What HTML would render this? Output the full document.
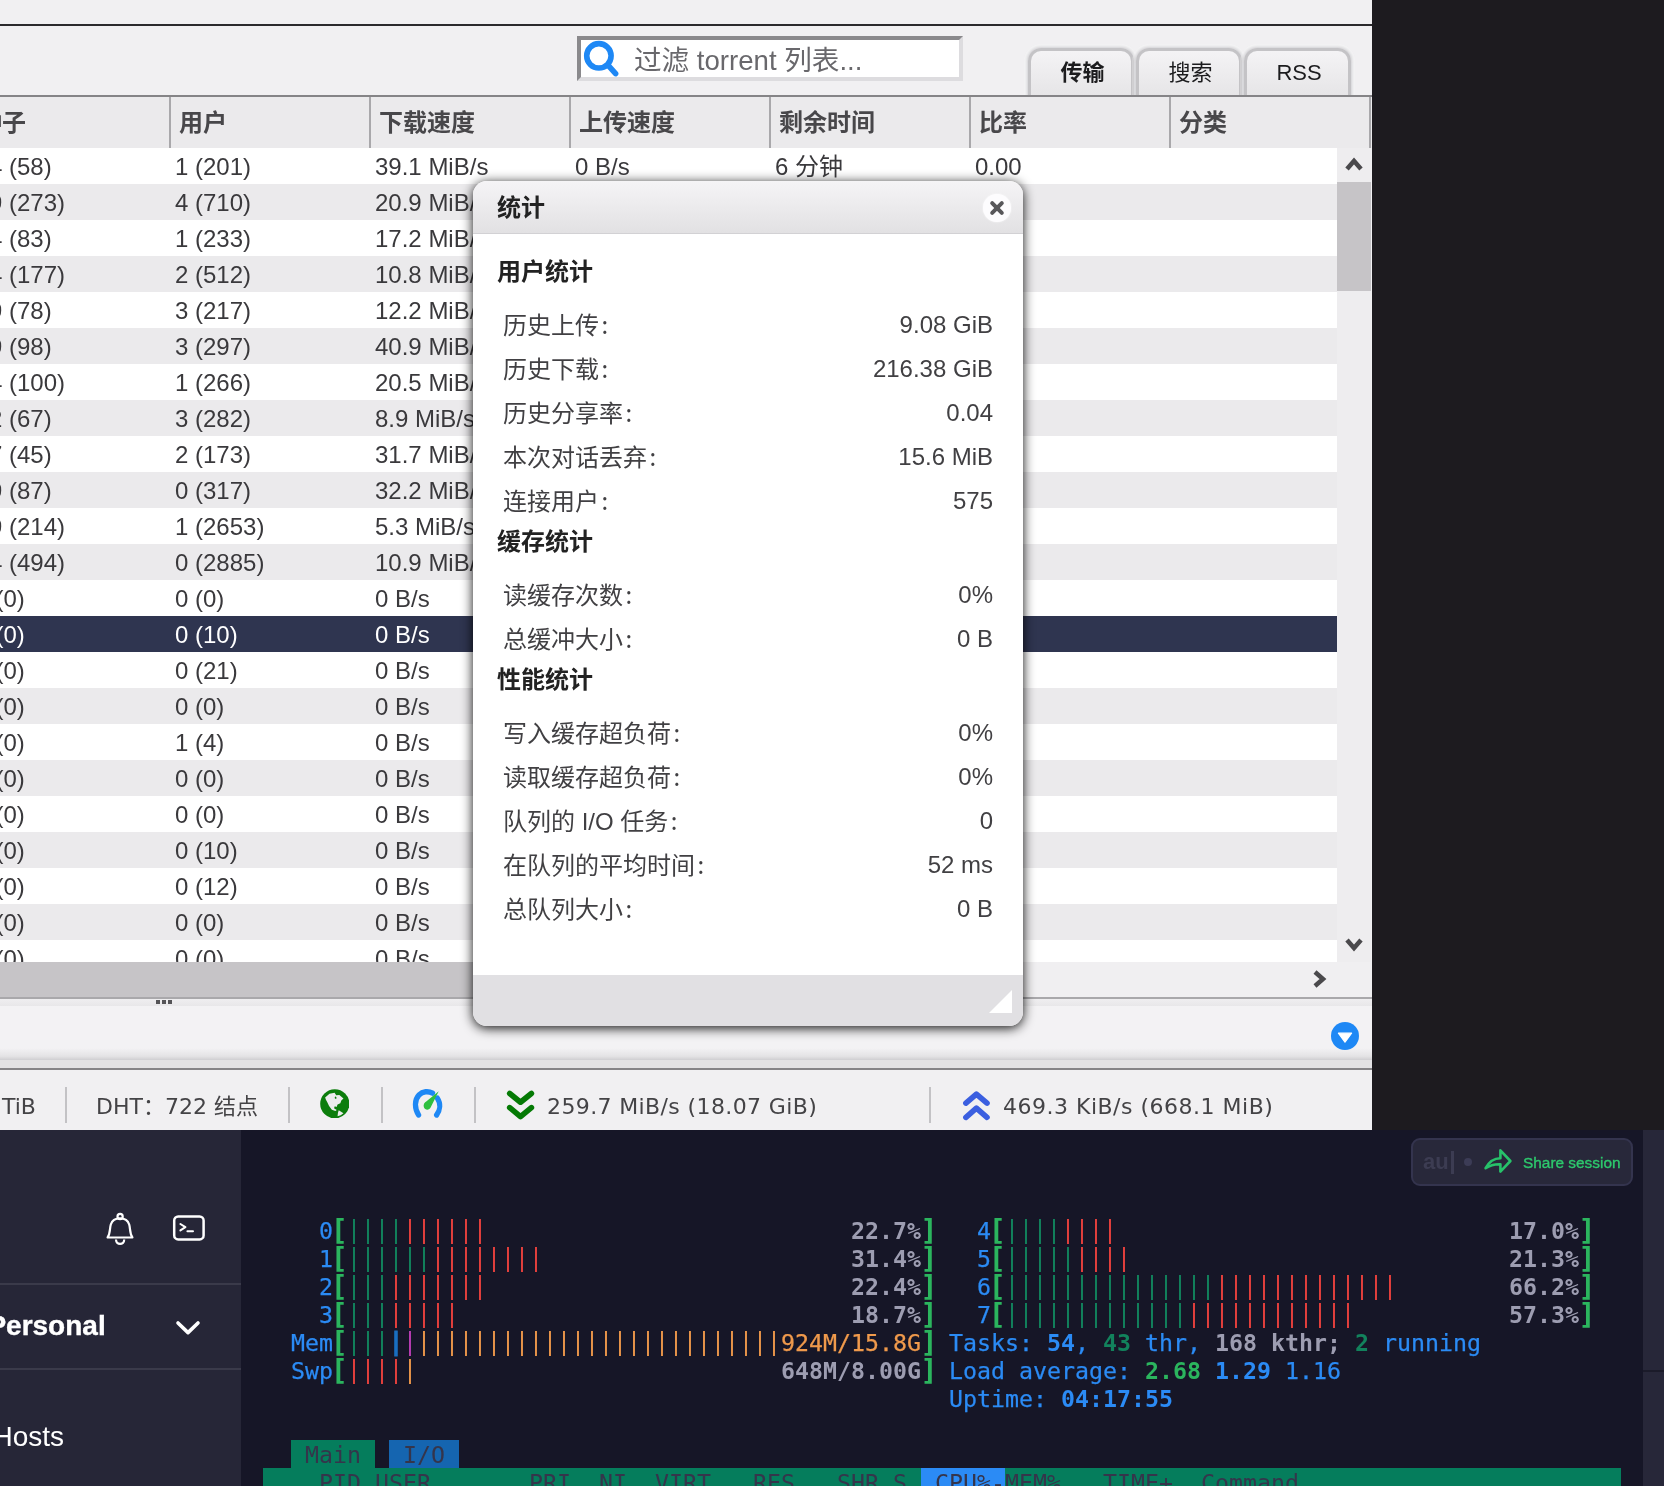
<!DOCTYPE html>
<html lang="zh-CN">
<head>
<meta charset="utf-8">
<title>qBittorrent</title>
<style>
*{box-sizing:border-box;margin:0;padding:0}
html,body{width:1664px;height:1486px;overflow:hidden;background:#1d1b1f}
body{position:relative;font-family:"Liberation Sans","Noto Sans CJK SC",sans-serif;color:#3b3b3d}
.abs{position:absolute}
/* ---------- qBittorrent app ---------- */
#app{will-change:transform;position:absolute;left:0;top:0;width:1372px;height:1130px;background:#f1f0f2;overflow:hidden}
#topline{position:absolute;left:0;top:24px;width:1372px;height:2px;background:#2b2a2d}
#search{position:absolute;left:577px;top:36px;width:386px;height:45px;background:#fff;border:4px solid;border-color:#8a898c #dddcdf #dddcdf #8a898c}
#search .ph{position:absolute;left:53px;top:3px;font:27.6px/36px "Liberation Sans","Noto Sans CJK SC",sans-serif;color:#69686c;white-space:nowrap}
.tab{position:absolute;top:48px;height:48px;width:106px;border:3px solid #c4c3c6;border-bottom:none;border-radius:13px 13px 0 0;background:linear-gradient(#f4f3f5,#e6e5e7);box-shadow:0 0 3px 1px rgba(140,138,146,.35),0 0 0 4px rgba(255,255,255,.25);font-size:22px;line-height:43px;padding-left:3px;text-align:center;color:#1c1c1e}
#hdr{position:absolute;left:0;top:95px;width:1372px;height:53px;background:#ebeaec;border-top:2px solid #858487}
#hdr div{position:absolute;top:0;height:51px;border-left:2px solid #a9a8ab;padding-left:8px;font:bold 24px/51px "Liberation Sans","Noto Sans CJK SC",sans-serif;color:#48474a;white-space:nowrap}
#rows{position:absolute;left:0;top:148px;width:1337px;height:814px;overflow:hidden;background:#fff}
.r{position:absolute;left:0;width:1337px;height:36px;font-size:24px;line-height:37px;color:#3a393c;white-space:nowrap}
.r.g{background:#ebeaec}
.r.sel{background:#2f3550;color:#fff}
.r .z{left:-24.5px}
.r span{position:absolute;top:0}
.c1{left:-11px}.c2{left:175px}.c3{left:375px}.c4{left:575px}.c5{left:775px}.c6{left:975px}

#vsb{position:absolute;left:1337px;top:148px;width:34px;height:814px;background:#eeedef}
#vsb .thumb{position:absolute;left:0;top:34px;width:34px;height:109px;background:#c6c4c7}
#hsb{position:absolute;left:0;top:962px;width:1372px;height:35px;background:#f0eff1}
#hsb .thumb{position:absolute;left:0;top:0;width:900px;height:35px;background:#c6c4c7}
#split{position:absolute;left:0;top:997px;width:1372px;height:9px;background:linear-gradient(#efeef0,#e8e7e9);border-top:2px solid #a9a8ab}
#split i{position:absolute;top:1px;width:4px;height:4px;background:#555457}
#split i:nth-child(1){left:156px}#split i:nth-child(2){left:162px}#split i:nth-child(3){left:168px}
#panel{position:absolute;left:0;top:1006px;width:1372px;height:54px;background:linear-gradient(#f3f2f4 0,#f3f2f4 78%,#e4e3e5 93%,#cfced1 100%)}
#band{position:absolute;left:0;top:1060px;width:1372px;height:10px;background:#e3e2e4;border-bottom:2px solid #858487}
#status{position:absolute;left:0;top:1070px;width:1372px;height:59px;background:#f1f0f2}
#status .st{position:absolute;top:23px;font:22px/28px "DejaVu Sans","Noto Sans CJK SC",sans-serif;color:#444346;white-space:nowrap}
#status .sp{letter-spacing:.38px}
#status .sep{position:absolute;top:17px;width:2px;height:36px;background:#c3c2c5}
#dlg{position:absolute;left:473px;top:181px;width:550px;height:845px;border-radius:14px;background:#fff;box-shadow:0 2px 12px 0 rgba(0,0,0,.95);overflow:hidden}
#dlg .ttl{position:absolute;left:0;top:0;width:550px;height:53px;background:linear-gradient(#f5f4f6,#e2e1e3);border-bottom:1px solid #d2d1d4}
#dlg .ttl b{position:absolute;left:24px;top:9px;font:bold 24px/36px "Liberation Sans","Noto Sans CJK SC",sans-serif;color:#222}
#dlg h3{position:absolute;left:24px;font:bold 24px/36px "Liberation Sans","Noto Sans CJK SC",sans-serif;color:#222;white-space:nowrap}
#dlg .body{position:absolute;left:0;top:0;width:550px;height:794px}
#dlg .kv{position:absolute;left:30px;width:490px;height:44px;font:24px/41px "Liberation Sans","Noto Sans CJK SC",sans-serif;color:#414043;white-space:nowrap}
#dlg .kv i{font-style:normal;font-family:"Noto Sans CJK SC",sans-serif;margin-left:2.5px}
#dlg .kv em{position:absolute;right:0;top:1px;font-style:normal}
#dlg .ft{position:absolute;left:0;top:794px;width:550px;height:51px;background:#e1e0e3}
#dlg .x{position:absolute;left:510px;top:13px;width:28px;height:28px;border-radius:14px;background:#fdfcfe;box-shadow:0 0 2px rgba(255,255,255,.9)}
/* ---------- terminal ---------- */
#tapp{will-change:transform;position:absolute;left:0;top:1130px;width:1664px;height:356px;background:#161627;overflow:hidden}
#side{position:absolute;left:0;top:0;width:241px;height:356px;background:#262637}
#side .ln{position:absolute;left:0;width:241px;height:2px;background:#3a3a4a}
#side .pers{position:absolute;left:-12.6px;top:178px;font:bold 28px/36px "Liberation Sans",sans-serif;color:#fff;-webkit-text-stroke:.4px #fff}
#side .hosts{position:absolute;left:-7.5px;top:288.5px;font:28px/36px "Liberation Sans",sans-serif;color:#fff}
#rstrip{position:absolute;left:1643px;top:0;width:21px;height:356px;background:#272739}
#rstrip .ln{position:absolute;left:0;width:21px;height:2px;background:#1b1b2a}
#share{position:absolute;left:1411px;top:8px;width:222px;height:48px;border-radius:9px;background:#28283a;border:2px solid #34344e}
#share .au{position:absolute;left:10px;top:7px;font:bold 22px/30px "Liberation Sans",sans-serif;color:#3c3c52}
#share .cur{position:absolute;left:38px;top:11px;width:3px;height:23px;background:#3c3c52}
#share .dot{position:absolute;left:51px;top:18px;width:8px;height:8px;border-radius:4px;background:#3c3c56}
#share .ss{position:absolute;left:110px;top:9px;font:15.4px/28px "Liberation Sans",sans-serif;color:#2dc96d;-webkit-text-stroke:.35px #2dc96d;white-space:nowrap}
#term{position:absolute;left:263px;top:-1129px;width:1380px;height:1486px;font:23.25px/28px "DejaVu Sans Mono","Liberation Mono",monospace}
.tr{position:absolute;left:0;height:28px;width:1380px;white-space:pre}
.tr span{position:absolute;top:0;height:28px}
.bl{color:#2b8bf5;-webkit-text-stroke:.25px #2b8bf5}.blb{color:#2b8bf5;font-weight:bold}
.bk{color:#2bb55e;font-weight:bold;width:14px}
.bk.kl{transform:translateY(-.6px) scale(1.25,1.19);transform-origin:75% 50%}
.bk.kr{transform:translateY(-.6px) scale(1.25,1.19);transform-origin:25% 50%}
.bg,.br,.bo,.bb,.bm{transform:translateY(-2.3px) scaleY(1.1);transform-origin:50% 50%}
.bg{color:#12825c}.br{color:#e5403d}
.bb{color:#1a6fc0;font-weight:bold;-webkit-text-stroke:.8px #1a6fc0}.bm{color:#b93db3}.bo{color:#e8954a}.or{color:#f09a4c;-webkit-text-stroke:.25px #f09a4c}.gy{color:#9d9db1;font-weight:bold}
.gnb{color:#12825c;font-weight:bold}.lgb{color:#2bb55e;font-weight:bold}.dk{color:#35354b}
.tr span.tabm,.tr span.tabi,.tr span.hbar,.tr span.hsel{top:-1px}
.tabm{background:#057d5c}.tabi{background:#1565b0}.hbar{background:#057d5c}.hsel{background:#2b8bf5}
</style>
</head>
<body>
<div id="app">
  <div id="topline"></div>
  <div id="search"><svg class="abs" style="left:0;top:0" width="44" height="40" viewBox="0 0 44 40"><circle cx="17.9" cy="15.8" r="12.2" fill="none" stroke="#1e88f5" stroke-width="5.6"/><path d="M27 25.2 L34.6 33.6" stroke="#1e88f5" stroke-width="5.6" stroke-linecap="round"/></svg><span class="ph">过滤 torrent 列表...</span></div>
  <div class="tab" style="left:1028px;font-weight:bold">传输</div>
  <div class="tab" style="left:1136px">搜索</div>
  <div class="tab" style="left:1244px;width:107px">RSS</div>
  <div id="hdr">
    <div style="left:-32px;width:202px">种子</div>
    <div style="left:169px;width:200px">用户</div>
    <div style="left:369px;width:200px">下载速度</div>
    <div style="left:569px;width:200px">上传速度</div>
    <div style="left:769px;width:200px">剩余时间</div>
    <div style="left:969px;width:200px">比率</div>
    <div style="left:1169px;width:200px">分类</div>
    <div style="left:1369px;width:3px;padding:0"></div>
  </div>
  <div id="rows">
<!--ROWS-->
<div class="r" style="top:0px"><span class="c1">4 (58)</span><span class="c2">1 (201)</span><span class="c3">39.1 MiB/s</span><span class="c4">0 B/s</span><span class="c5">6 分钟</span><span class="c6">0.00</span></div>
<div class="r g" style="top:36px"><span class="c1">9 (273)</span><span class="c2">4 (710)</span><span class="c3">20.9 MiB/s</span><span class="c4">0 B/s</span><span class="c5">12 分钟</span><span class="c6">0.00</span></div>
<div class="r" style="top:72px"><span class="c1">4 (83)</span><span class="c2">1 (233)</span><span class="c3">17.2 MiB/s</span><span class="c4">0 B/s</span><span class="c5">9 分钟</span><span class="c6">0.00</span></div>
<div class="r g" style="top:108px"><span class="c1">4 (177)</span><span class="c2">2 (512)</span><span class="c3">10.8 MiB/s</span><span class="c4">0 B/s</span><span class="c5">21 分钟</span><span class="c6">0.00</span></div>
<div class="r" style="top:144px"><span class="c1">9 (78)</span><span class="c2">3 (217)</span><span class="c3">12.2 MiB/s</span><span class="c4">0 B/s</span><span class="c5">15 分钟</span><span class="c6">0.00</span></div>
<div class="r g" style="top:180px"><span class="c1">9 (98)</span><span class="c2">3 (297)</span><span class="c3">40.9 MiB/s</span><span class="c4">0 B/s</span><span class="c5">5 分钟</span><span class="c6">0.00</span></div>
<div class="r" style="top:216px"><span class="c1">4 (100)</span><span class="c2">1 (266)</span><span class="c3">20.5 MiB/s</span><span class="c4">0 B/s</span><span class="c5">11 分钟</span><span class="c6">0.00</span></div>
<div class="r g" style="top:252px"><span class="c1">2 (67)</span><span class="c2">3 (282)</span><span class="c3">8.9 MiB/s</span><span class="c4">0 B/s</span><span class="c5">34 分钟</span><span class="c6">0.00</span></div>
<div class="r" style="top:288px"><span class="c1">7 (45)</span><span class="c2">2 (173)</span><span class="c3">31.7 MiB/s</span><span class="c4">0 B/s</span><span class="c5">7 分钟</span><span class="c6">0.00</span></div>
<div class="r g" style="top:324px"><span class="c1">9 (87)</span><span class="c2">0 (317)</span><span class="c3">32.2 MiB/s</span><span class="c4">0 B/s</span><span class="c5">8 分钟</span><span class="c6">0.00</span></div>
<div class="r" style="top:360px"><span class="c1">9 (214)</span><span class="c2">1 (2653)</span><span class="c3">5.3 MiB/s</span><span class="c4">0 B/s</span><span class="c5">48 分钟</span><span class="c6">0.00</span></div>
<div class="r g" style="top:396px"><span class="c1">4 (494)</span><span class="c2">0 (2885)</span><span class="c3">10.9 MiB/s</span><span class="c4">0 B/s</span><span class="c5">26 分钟</span><span class="c6">0.00</span></div>
<div class="r" style="top:432px"><span class="c1 z">0 (0)</span><span class="c2">0 (0)</span><span class="c3">0 B/s</span><span class="c4">0 B/s</span><span class="c5">∞</span><span class="c6">0.00</span></div>
<div class="r sel" style="top:468px"><span class="c1 z">0 (0)</span><span class="c2">0 (10)</span><span class="c3">0 B/s</span><span class="c4">0 B/s</span><span class="c5">∞</span><span class="c6">0.00</span></div>
<div class="r" style="top:504px"><span class="c1 z">0 (0)</span><span class="c2">0 (21)</span><span class="c3">0 B/s</span><span class="c4">0 B/s</span><span class="c5">∞</span><span class="c6">0.00</span></div>
<div class="r g" style="top:540px"><span class="c1 z">0 (0)</span><span class="c2">0 (0)</span><span class="c3">0 B/s</span><span class="c4">0 B/s</span><span class="c5">∞</span><span class="c6">0.00</span></div>
<div class="r" style="top:576px"><span class="c1 z">0 (0)</span><span class="c2">1 (4)</span><span class="c3">0 B/s</span><span class="c4">0 B/s</span><span class="c5">∞</span><span class="c6">0.00</span></div>
<div class="r g" style="top:612px"><span class="c1 z">0 (0)</span><span class="c2">0 (0)</span><span class="c3">0 B/s</span><span class="c4">0 B/s</span><span class="c5">∞</span><span class="c6">0.00</span></div>
<div class="r" style="top:648px"><span class="c1 z">0 (0)</span><span class="c2">0 (0)</span><span class="c3">0 B/s</span><span class="c4">0 B/s</span><span class="c5">∞</span><span class="c6">0.00</span></div>
<div class="r g" style="top:684px"><span class="c1 z">0 (0)</span><span class="c2">0 (10)</span><span class="c3">0 B/s</span><span class="c4">0 B/s</span><span class="c5">∞</span><span class="c6">0.00</span></div>
<div class="r" style="top:720px"><span class="c1 z">0 (0)</span><span class="c2">0 (12)</span><span class="c3">0 B/s</span><span class="c4">0 B/s</span><span class="c5">∞</span><span class="c6">0.00</span></div>
<div class="r g" style="top:756px"><span class="c1 z">0 (0)</span><span class="c2">0 (0)</span><span class="c3">0 B/s</span><span class="c4">0 B/s</span><span class="c5">∞</span><span class="c6">0.00</span></div>
<div class="r" style="top:792px"><span class="c1 z">0 (0)</span><span class="c2">0 (0)</span><span class="c3">0 B/s</span><span class="c4">0 B/s</span><span class="c5">∞</span><span class="c6">0.00</span></div>
<!--/ROWS-->
  </div>
  <!-- vertical scrollbar -->
  <div id="vsb"><div class="thumb"></div>
    <svg class="abs" style="left:8px;top:8px" width="18" height="16" viewBox="0 0 18 16"><path d="M2 13 L9 5 L16 13" fill="none" stroke="#4a494c" stroke-width="4.5"/></svg>
    <svg class="abs" style="left:8px;top:789px" width="18" height="16" viewBox="0 0 18 16"><path d="M2 3 L9 11 L16 3" fill="none" stroke="#4a494c" stroke-width="4.5"/></svg>
  </div>
  <!-- horizontal scrollbar -->
  <div id="hsb"><div class="thumb"></div>
    <svg class="abs" style="left:1312px;top:8px" width="16" height="18" viewBox="0 0 16 18"><path d="M3 2 L11 9 L3 16" fill="none" stroke="#4a494c" stroke-width="4.5"/></svg>
  </div>
  <div id="split"><i></i><i></i><i></i></div>
  <div id="panel">
    <svg class="abs" style="left:1331px;top:16px" width="28" height="28" viewBox="0 0 28 28"><circle cx="14" cy="14" r="14" fill="#1e88f5"/><path d="M7.4 11.2 H20.6 L14 20.2 Z" fill="#fff" stroke="#fff" stroke-width="1.2" stroke-linejoin="round"/></svg>
  </div>
  <div id="band"></div>
  <div id="status">
    <svg class="abs" style="left:319.6px;top:18.6px" width="29.6" height="29.6" viewBox="0 0 30 30"><circle cx="15" cy="15" r="14.8" fill="#0c7d0c"/><path d="M5.2 8.6 L9.6 4.8 L14.8 3.8 L16.4 6.4 L19.6 6 L23.8 9.6 L21.6 11.6 L20.6 14.4 L17.8 15.8 L16.8 18.2 L15 17.6 L14.2 19.4 L17 21.2 L15.6 22.4 L12 21 L9.2 17.2 L7.4 13.4 L6 11 Z M19 21.6 L23.8 24.6 L21 26.6 L17.8 27.6 L18.2 24.2 Z" fill="#edecee"/><path d="M15.6 7.4 l1.4 1.6 l-1 1.2 l-1.2 -1.1 Z" fill="#0c7d0c"/></svg>
    <svg class="abs" style="left:412.4px;top:18px" width="31" height="31" viewBox="0 0 32 31" preserveAspectRatio="none"><path d="M6.8 27 C2.6 20.5 2.2 12 7.2 7 C11 3.2 17 2.8 21.2 5.2 M26.2 10.2 C29.8 15.5 29.2 22 25.4 27" fill="none" stroke="#1e88f5" stroke-width="5.4" stroke-linecap="round"/><path d="M27.6 3.2 L19.2 19.6 C17.6 22.6 13.2 22.2 12.2 19 C11.4 16.4 13 14.4 15 13.2 Z" fill="#2fbf3f"/></svg>
    <svg class="abs" style="left:505px;top:18px" width="32" height="34" viewBox="0 0 32 34"><path d="M4.7 5.5 L15.5 14.2 L26.4 5.5 M4.7 19.6 L15.5 28.7 L26.4 19.6" fill="none" stroke="#057a05" stroke-width="5.6" stroke-linecap="round" stroke-linejoin="round"/></svg>
    <svg class="abs" style="left:961px;top:18px" width="32" height="34" viewBox="0 0 32 34"><path d="M4.9 15.1 L15.4 6.1 L26 15.1 M4.9 29.3 L15.4 20.2 L26 29.3" fill="none" stroke="#3b5fe0" stroke-width="5.6" stroke-linecap="round" stroke-linejoin="round"/></svg>
    <span class="st" style="left:2px">TiB</span>
    <i class="sep" style="left:65px"></i>
    <span class="st" style="left:96px">DHT：722 结点</span>
    <i class="sep" style="left:288px"></i>
    <i class="sep" style="left:381px"></i>
    <i class="sep" style="left:474px"></i>
    <span class="st sp" style="left:547px">259.7 MiB/s (18.07 GiB)</span>
    <i class="sep" style="left:929px"></i>
    <span class="st sp" style="left:1003px;letter-spacing:.5px">469.3 KiB/s (668.1 MiB)</span>
  </div>
  <!-- dialog -->
  <div id="dlg">
    <div class="ttl"><b>统计</b><span class="x"><svg width="28" height="28" viewBox="0 0 28 28"><path d="M9.2 9.2 L18.8 18.8 M18.8 9.2 L9.2 18.8" stroke="#58575a" stroke-width="4" stroke-linecap="round"/></svg></span></div>
    <div class="body">
      <h3 style="top:73px">用户统计</h3>
      <div class="kv" style="top:122px"><span>历史上传<i>:</i></span><em>9.08 GiB</em></div>
      <div class="kv" style="top:166px"><span>历史下载<i>:</i></span><em>216.38 GiB</em></div>
      <div class="kv" style="top:210px"><span>历史分享率<i>:</i></span><em>0.04</em></div>
      <div class="kv" style="top:254px"><span>本次对话丢弃<i>:</i></span><em>15.6 MiB</em></div>
      <div class="kv" style="top:298px"><span>连接用户<i>:</i></span><em>575</em></div>
      <h3 style="top:343px">缓存统计</h3>
      <div class="kv" style="top:392px"><span>读缓存次数<i>:</i></span><em>0%</em></div>
      <div class="kv" style="top:436px"><span>总缓冲大小<i>:</i></span><em>0 B</em></div>
      <h3 style="top:481px">性能统计</h3>
      <div class="kv" style="top:530px"><span>写入缓存超负荷<i>:</i></span><em>0%</em></div>
      <div class="kv" style="top:574px"><span>读取缓存超负荷<i>:</i></span><em>0%</em></div>
      <div class="kv" style="top:618px"><span>队列的 I/O 任务<i>:</i></span><em>0</em></div>
      <div class="kv" style="top:662px"><span>在队列的平均时间<i>:</i></span><em>52 ms</em></div>
      <div class="kv" style="top:706px"><span>总队列大小<i>:</i></span><em>0 B</em></div>
    </div>
    <div class="ft"><svg class="abs" style="left:516px;top:15px" width="23" height="23" viewBox="0 0 23 23"><path d="M23 0 V23 H0 Z" fill="#fff"/></svg></div>
  </div>
</div>
<!-- ---------- terminal app ---------- -->
<div id="tapp">
  <div id="side">
    <div class="ln" style="top:153px"></div>
    <div class="ln" style="top:238px"></div>
    <svg class="abs" style="left:105px;top:81px" width="30" height="36" viewBox="0 0 30 36"><g fill="none" stroke="#fff" stroke-width="2.2" stroke-linejoin="round"><circle cx="15.1" cy="5.5" r="2.6"/><path d="M2.6 26.5 H27.4 C24.6 22.5 25.4 17.5 24.2 13.5 C23 9.6 19.6 7.4 15 7.4 C10.4 7.4 7 9.6 5.8 13.5 C4.6 17.5 5.4 22.5 2.6 26.5 Z"/><path d="M11 28.6 C11 34.4 19.2 34.4 19.2 28.6"/></g></svg>
    <svg class="abs" style="left:171px;top:84px" width="36" height="28" viewBox="0 0 36 28"><rect x="3.2" y="2.4" width="29.4" height="23" rx="4" fill="none" stroke="#fff" stroke-width="2.5"/><path d="M9.4 10 L14.4 13.2 L9.4 16.4 M16.4 17.2 H22" fill="none" stroke="#fff" stroke-width="2" stroke-linecap="round" stroke-linejoin="round"/></svg>
    <svg class="abs" style="left:174px;top:188px" width="28" height="20" viewBox="0 0 28 20"><path d="M4 5 L14 14.6 L24 5" fill="none" stroke="#fff" stroke-width="3.6" stroke-linecap="round" stroke-linejoin="round"/></svg>
    <div class="pers">Personal</div>
    <div class="hosts">Hosts</div>
  </div>
  <div id="rstrip"><div class="ln" style="top:240px"></div></div>
  <div id="share"><span class="au">au</span><span class="cur"></span><span class="dot"></span><svg class="abs" style="left:69px;top:5px" width="34" height="32" viewBox="0 0 34 32"><path d="M3.6 23.2 C7 16.8 12 13.2 18.4 13.2 V5.4 L28.4 16 L18.4 26.6 V19.2 C12.6 19 7.6 20.4 3.6 23.2 Z" fill="none" stroke="#27c26a" stroke-width="2.6" stroke-linejoin="round"/></svg><span class="ss">Share session</span></div>
  <div id="term">
<!--TERM-->
<div class="tr" style="top:1216px"><span class="bl" style="left:56px">0</span><span class="bk kl" style="left:70px">[</span><span class="bg" style="left:84px">||||</span><span class="br" style="left:140px">||||||</span><span class="gy" style="left:588px">22.7%</span><span class="bk kr" style="left:658px">]</span><span class="bl" style="left:714px">4</span><span class="bk kl" style="left:728px">[</span><span class="bg" style="left:742px">||||</span><span class="br" style="left:798px">||||</span><span class="gy" style="left:1246px">17.0%</span><span class="bk kr" style="left:1316px">]</span></div>
<div class="tr" style="top:1244px"><span class="bl" style="left:56px">1</span><span class="bk kl" style="left:70px">[</span><span class="bg" style="left:84px">||||||</span><span class="br" style="left:168px">||||||||</span><span class="gy" style="left:588px">31.4%</span><span class="bk kr" style="left:658px">]</span><span class="bl" style="left:714px">5</span><span class="bk kl" style="left:728px">[</span><span class="bg" style="left:742px">|||||</span><span class="br" style="left:812px">||||</span><span class="gy" style="left:1246px">21.3%</span><span class="bk kr" style="left:1316px">]</span></div>
<div class="tr" style="top:1272px"><span class="bl" style="left:56px">2</span><span class="bk kl" style="left:70px">[</span><span class="bg" style="left:84px">|||</span><span class="br" style="left:126px">|||||||</span><span class="gy" style="left:588px">22.4%</span><span class="bk kr" style="left:658px">]</span><span class="bl" style="left:714px">6</span><span class="bk kl" style="left:728px">[</span><span class="bg" style="left:742px">|||||||||||||||</span><span class="br" style="left:952px">|||||||||||||</span><span class="gy" style="left:1246px">66.2%</span><span class="bk kr" style="left:1316px">]</span></div>
<div class="tr" style="top:1300px"><span class="bl" style="left:56px">3</span><span class="bk kl" style="left:70px">[</span><span class="bg" style="left:84px">|||</span><span class="br" style="left:126px">|||||</span><span class="gy" style="left:588px">18.7%</span><span class="bk kr" style="left:658px">]</span><span class="bl" style="left:714px">7</span><span class="bk kl" style="left:728px">[</span><span class="bg" style="left:742px">|||||||||||||</span><span class="br" style="left:924px">||||||||||||</span><span class="gy" style="left:1246px">57.3%</span><span class="bk kr" style="left:1316px">]</span></div>
<div class="tr" style="top:1328px"><span class="bl" style="left:28px">Mem</span><span class="bk kl" style="left:70px">[</span><span class="bg" style="left:84px">|||</span><span class="bb" style="left:126px">|</span><span class="bm" style="left:140px">|</span><span class="bo" style="left:154px">||||||||||||||||||||||||||</span><span class="or" style="left:518px">924M/15.8G</span><span class="bk kr" style="left:658px">]</span><span class="bl" style="left:686px">Tasks: </span><span class="blb" style="left:784px">54</span><span class="bl" style="left:812px">, </span><span class="gnb" style="left:840px">43</span><span class="bl" style="left:882px">thr, </span><span class="gy" style="left:952px">168 kthr; </span><span class="gnb" style="left:1092px">2</span><span class="bl" style="left:1120px">running</span></div>
<div class="tr" style="top:1356px"><span class="bl" style="left:28px">Swp</span><span class="bk kl" style="left:70px">[</span><span class="br" style="left:84px">||||</span><span class="bo" style="left:140px">|</span><span class="gy" style="left:518px">648M/8.00G</span><span class="bk kr" style="left:658px">]</span><span class="bl" style="left:686px">Load average: </span><span class="lgb" style="left:882px">2.68</span><span class="blb" style="left:952px">1.29</span><span class="bl" style="left:1022px">1.16</span></div>
<div class="tr" style="top:1384px"><span class="bl" style="left:686px">Uptime: </span><span class="blb" style="left:798px">04:17:55</span></div>
<div class="tr" style="top:1440px"><span class="tabm" style="left:28px;width:84px"></span><span class="dk" style="left:42px">Main</span><span class="tabi" style="left:126px;width:70px"></span><span class="dk" style="left:140px">I/O</span></div>
<div class="tr" style="top:1468px"><span class="hbar" style="left:0;width:1358px"></span><span class="hsel" style="left:658px;width:84px"></span><span class="dk" style="left:56px">PID</span><span class="dk" style="left:112px">USER</span><span class="dk" style="left:266px">PRI</span><span class="dk" style="left:336px">NI</span><span class="dk" style="left:392px">VIRT</span><span class="dk" style="left:490px">RES</span><span class="dk" style="left:574px">SHR</span><span class="dk" style="left:630px">S</span><span class="dk" style="left:672px">CPU%-</span><span class="dk" style="left:742px">MEM%</span><span class="dk" style="left:840px">TIME+</span><span class="dk" style="left:938px">Command</span></div>
<!--/TERM-->
  </div>
</div>
</body>
</html>
